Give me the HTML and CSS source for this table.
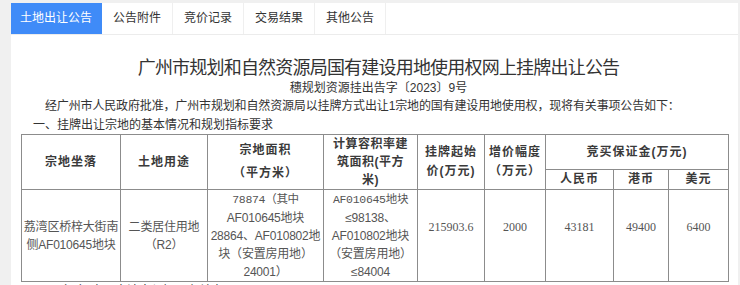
FILE: index.html
```html
<!DOCTYPE html>
<html lang="zh-CN">
<head>
<meta charset="utf-8">
<title>土地出让公告</title>
<link rel="stylesheet" href="styles.css">
</head>
<body>
<div class="panel">
  <div class="tabs">
    <div class="tab active">土地出让公告</div>
    <div class="tab">公告附件</div>
    <div class="tab">竞价记录</div>
    <div class="tab">交易结果</div>
    <div class="tab">其他公告</div>
  </div>
  <div class="content">
    <h1 class="title">广州市规划和自然资源局国有建设用地使用权网上挂牌出让公告</h1>
    <p class="subtitle">穗规划资源挂出告字〔2023〕9号</p>
    <p class="para">经广州市人民政府批准，广州市规划和自然资源局以挂牌方式出让1宗地的国有建设用地使用权，现将有关事项公告如下：</p>
    <p class="section">一、挂牌出让宗地的基本情况和规划指标要求</p>
    <table class="grid">
      <colgroup>
        <col class="c1"><col class="c2"><col class="c3"><col class="c4"><col class="c5"><col class="c6"><col class="c7"><col class="c8"><col class="c9">
      </colgroup>
      <thead>
        <tr class="hr1">
          <th rowspan="2">宗地坐落</th>
          <th rowspan="2">土地用途</th>
          <th rowspan="2" class="tall">宗地面积<br>（平方米）</th>
          <th rowspan="2" class="tight">计算容积率建<br>筑面积(平方<br>米)</th>
          <th rowspan="2" class="mid">挂牌起始<br>价(万元)</th>
          <th rowspan="2" class="mid">增价幅度<br>（万元）</th>
          <th colspan="3">竞买保证金(万元)</th>
        </tr>
        <tr class="hr2">
          <th>人民币</th>
          <th>港币</th>
          <th>美元</th>
        </tr>
      </thead>
      <tbody>
        <tr class="br">
          <td class="sans">荔湾区桥梓大街南<br>侧AF010645地块</td>
          <td class="sans">二类居住用地<br>（R2）</td>
          <td class="sans"><span class="mono">78874（其中</span><br>AF010645地块<br>28864、AF010802地<br>块（安置房用地）<br>24001）</td>
          <td class="sans"><span class="mono">AF010645地块</span><br>≤98138、<br>AF010802地块<br>（安置房用地）<br>≤84004</td>
          <td class="num">215903.6</td>
          <td class="num">2000</td>
          <td class="num">43181</td>
          <td class="num">49400</td>
          <td class="num">6400</td>
        </tr>
      </tbody>
    </table>
    <p class="after">（二）竞买申请人须知及有关事项</p>
  </div>
</div>
</body>
</html>
```
FILE: styles.css
```css
html, body {
  margin: 0;
  padding: 0;
  background: #f0f0f0;
  font-family: "Liberation Sans", "Noto Sans CJK SC", sans-serif;
  color: #333;
}

.panel {
  margin: 3px 2px 0 11px;
  background: #fff;
  height: 282px;
  overflow: hidden;
}

.tabs {
  display: flex;
  height: 31px;
  border-bottom: 1px solid #ececec;
}

.tab {
  width: 70px;
  line-height: 31px;
  text-align: center;
  font-size: 12px;
  color: #333;
  border-right: 1px solid #efefef;
}

.tab.active {
  width: 90px;
  background: #3f8bf8;
  color: #fff;
  border-right-color: #3f8bf8;
}

.content {
  padding: 0 10px;
}

.title {
  margin: 22px 0 0;
  font-size: 18px;
  line-height: 22px;
  font-weight: normal;
  text-align: center;
  color: #333;
  letter-spacing: -0.8px;
  padding-left: 8px;
}

.subtitle {
  margin: 0;
  font-size: 12px;
  line-height: 18px;
  text-align: center;
  color: #333;
  padding-left: 8px;
}

.para {
  margin: 0;
  font-size: 12px;
  line-height: 19px;
  padding-left: 24px;
  color: #333;
  letter-spacing: -0.15px;
  white-space: nowrap;
}

.section {
  margin: 0;
  font-size: 12px;
  line-height: 19px;
  padding-left: 12px;
  color: #333;
}

.grid {
  border-collapse: collapse;
  width: 707px;
  table-layout: fixed;
  margin-top: -1px;
}

.c1 { width: 99px; }
.c2 { width: 87px; }
.c3 { width: 116px; }
.c4 { width: 94px; }
.c5 { width: 67px; }
.c6 { width: 61px; }
.c7 { width: 68px; }
.c8 { width: 55px; }
.c9 { width: 60px; }

.grid th, .grid td {
  border: 1px solid #8c8c8c;
  padding: 0;
  text-align: center;
  vertical-align: middle;
}

.grid th {
  font-size: 12px;
  font-weight: bold;
  color: #3a3a3a;
  letter-spacing: 1px;
  line-height: 19px;
}

.grid th.tall { line-height: 23px; }
.grid th.tight { line-height: 18px; letter-spacing: 0.5px; }

.hr1 { height: 35px; }
.hr2 { height: 20px; }
.br { height: 90px; }

.grid td.sans {
  font-size: 12px;
  line-height: 18px;
  color: #555;
  letter-spacing: -0.2px;
  white-space: nowrap;
  overflow: hidden;
}

.mono {
  font-family: "Liberation Mono", "Noto Sans CJK SC", monospace;
  font-size: 11.5px;
  letter-spacing: -0.3px;
}

.grid td.num {
  font-family: "Liberation Serif", "Noto Sans CJK SC", serif;
  font-size: 12px;
  color: #555;
  padding-bottom: 16px;
}

.after {
  margin: 0;
  font-size: 12px;
  line-height: 19px;
  padding-left: 34px;
  color: #333;
}
```
